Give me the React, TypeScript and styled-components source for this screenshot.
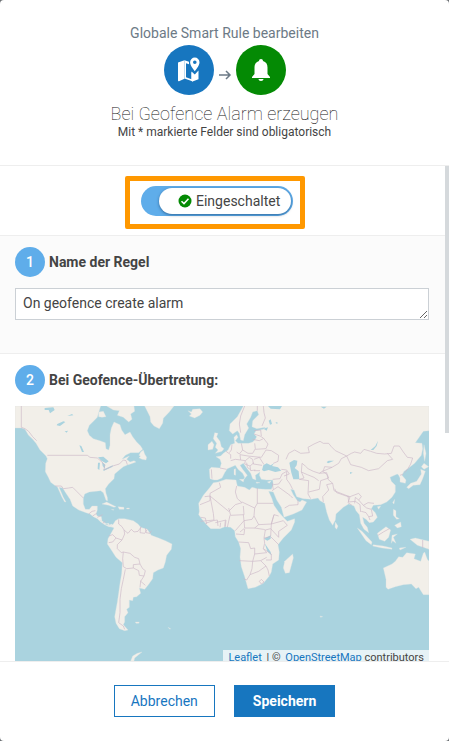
import React, { useState } from "react";
import styled, { createGlobalStyle } from "styled-components";

const GlobalStyle = createGlobalStyle`
  *, *::before, *::after { box-sizing: border-box; }
  body {
    margin: 0;
    background: #6b6f73;
    color: #444;
    font: 14px/20px Roboto, "Liberation Sans", sans-serif;
  }
  button, input, textarea { font: inherit; color: inherit; }
`;

const Dialog = styled.form`
  display: flex;
  flex-direction: column;
  height: 100vh;
  background: #fff;
  border-radius: 4px;
  overflow: hidden;
`;

const Header = styled.header`
  flex: none;
  display: flex;
  flex-direction: column;
  align-items: center;
  padding: 23px 15px 25px;
  border-bottom: 1px solid #eee;
  text-align: center;
`;

const Kicker = styled.p`
  margin: 0;
  line-height: 20px;
  color: #6c7a86;
`;

const RuleIcons = styled.div`
  display: flex;
  align-items: center;
  gap: 4px;
  margin: 2px 0 8px;
  color: #6c7a86;
`;

const IconDisc = styled.span<{ $color: string }>`
  display: grid;
  place-items: center;
  width: 50px;
  height: 50px;
  border-radius: 50%;
  background: ${(p) => p.$color};
  color: #fff;
`;

const ArrowIcon = styled.svg`
  margin-top: 10px;
`;

const Title = styled.h1`
  margin: 0;
  color: #111;
  font-size: 18px;
  line-height: 22px;
  font-weight: 100;
`;

const Hint = styled.p`
  margin: 0;
  font-size: 12px;
  line-height: 15px;
`;

const Body = styled.div`
  flex: 1;
  min-height: 0;
  display: flex;
`;

const Content = styled.div`
  flex: 1;
  min-width: 0;
  overflow-y: auto;
  scrollbar-width: none;
`;

const Rail = styled.div`
  width: 4px;
`;

const Thumb = styled.div`
  height: 54%;
  background: #d5d9dc;
`;

const SwitchRow = styled.div`
  display: flex;
  justify-content: center;
  padding: 10px 15px 6px 0;
  border-bottom: 1px solid #eee;
`;

const Highlight = styled.div`
  padding: 5px 7px 8px 11px;
  border: 5px solid #ff9800;
  border-radius: 2px;
`;

const Switch = styled.label`
  display: flex;
  height: 30px;
  padding: 2px;
  border-radius: 15px;
  background: #5fadea;
  cursor: pointer;
`;

const SwitchInput = styled.input`
  appearance: none;
  width: 16px;
  height: 26px;
  margin: 0;
  border-radius: 13px;
`;

const Knob = styled.span`
  display: flex;
  align-items: center;
  gap: 4px;
  width: 132px;
  padding-left: 19px;
  border-radius: 13px;
  background: #fff;
  box-shadow: 0 1px 3px rgba(0, 40, 80, 0.5);
`;

const Step = styled.section<{ $shaded?: boolean }>`
  padding: ${(p) => (p.$shaded ? "11px 16px 33px 15px" : "11px 16px 16px 15px")};
  background: ${(p) => (p.$shaded ? "#fbfbfb" : "#fff")};
  border-bottom: 1px solid #eee;
`;

const StepTitle = styled.h2`
  display: flex;
  align-items: center;
  gap: 4px;
  margin: 0 0 11px;
  font-size: 14px;
  line-height: 20px;
  font-weight: 700;
`;

const StepNumber = styled.span`
  display: grid;
  place-items: center;
  width: 30px;
  height: 30px;
  border-radius: 50%;
  background: #5fadea;
  color: #fff;
  font-weight: 500;
`;

const NameField = styled.textarea`
  display: block;
  width: 100%;
  height: 32px;
  padding: 4px 7px;
  border: 1px solid #cbd0d5;
  border-radius: 0;
  background: #fff;
  resize: vertical;
  overflow: hidden;
  outline: none;
`;

const MapFrame = styled.div`
  position: relative;
  height: 260px;
  background: #aad3df;
  overflow: hidden;
`;

const MapSvg = styled.svg`
  display: block;
  width: 100%;
  height: 262px;
`;

const Attribution = styled.div`
  position: absolute;
  right: 0;
  bottom: 0;
  padding: 0 5px;
  background: rgba(255, 255, 255, 0.7);
  font-size: 11px;
  line-height: 16px;
  white-space: pre;
`;

const Separator = styled.span`
  margin: 0 2px;
`;

const MapLink = styled.a`
  color: #1776bf;
  text-decoration: none;
`;

const Footer = styled.footer`
  flex: none;
  display: flex;
  justify-content: center;
  gap: 19px;
  padding: 23px 15px 24px;
  border-top: 1px solid #eee;
`;

const Button = styled.button<{ $primary?: boolean }>`
  height: 32px;
  padding: 0 ${(p) => (p.$primary ? "18px" : "16px")};
  border: 1px solid #1776bf;
  background: ${(p) => (p.$primary ? "#1776bf" : "#fff")};
  color: ${(p) => (p.$primary ? "#fff" : "#1776bf")};
  font-weight: ${(p) => (p.$primary ? 700 : 400)};
  line-height: 20px;
  cursor: pointer;
`;

const GeofenceIcon = () => (
  <svg width="22" height="26" viewBox="0 0 22 26" fill="currentColor" aria-hidden="true">
    <path d="M0 5.500 6.500 3.200V21.800L1 24.200C.4 24.400 0 24.200 0 23.600z" />
    <path d="M6.500 3.200 11 4.800V7.200L8 6.200V20.300L13.500 22.200V15L15 16.800V24.500L6.500 21.500z" />
    <path d="M13.500 14.500 16.800 17.500 20.500 13.500V22.300L14.500 24.500 13.500 24z" />
    <path
      fillRule="evenodd"
      stroke="#1776bf"
      strokeWidth="1"
      paintOrder="stroke"
      d="M16.800 .5a4.700 4.700 0 0 1 4.700 4.700c0 3.500-4.700 9-4.700 9s-4.700-5.500-4.700-9a4.700 4.700 0 0 1 4.700-4.700zm0 3a1.800 1.800 0 1 0 0 3.600 1.800 1.800 0 0 0 0-3.600z"
    />
  </svg>
);

const BellIcon = () => (
  <svg width="18" height="22" viewBox="0 0 18 22" fill="currentColor" aria-hidden="true">
    <path d="M9 0c1.200 0 2 .8 2 2 3 .8 4.500 3.200 4.500 6.500V15L18 18v1H0v-1l2.500-3V8.500C2.500 5.200 4 2.800 7 2c0-1.200.8-2 2-2zM6.500 20h5c0 1.200-1.200 2-2.500 2s-2.500-.8-2.500-2z" />
  </svg>
);

/* Map coordinates: 3 units per pixel. */
const lands = [
  // North America
  "M-405 0H-148L-158 34-168 44-182 58-188 74-182 88-170 98-150 104-134 110-132 128-124 132-120 118-120 86-116 66-108 48-90 56-85 72-75 86-60 78-52 92-40 108-28 120-22 130-34 140-58 140-74 148-84 160-62 150-70 160-60 168-48 164-42 168-58 174-68 177-80 182-92 192-106 204-108 218-124 234-134 248-132 262-128 274-127 284-132 283-140 260-148 254-162 256-182 258-196 264-200 277-200 294-194 310-182 310-174 300-158 300-158 312-162 324-158 330-146 332-144 344-136 354-126 358-114 354-112 364-124 362-136 356-148 348-158 338-170 332-180 324-192 320-214 312-232 300-240 280-252 262-262 246-273 244-267 257-260 274-252 288-256 288-264 274-272 256-278 242-286 238-298 229-305 214-314 197-313 172-308 158-312 150-320 142-330 132-342 112-352 100-365 87-375 70-385 66-405 66Z",
  "M-130 0H-48L-46 16-58 24-54 40-64 48-80 34-98 28-92 14-110 12ZM-154 18-140 16-132 32-144 34-154 32ZM-36 154-28 138-20 132-16 144-10 154-12 162-24 160Z",
  "M-144 294-130 288-114 296-102 302-108 304-124 298ZM-96 302-78 304-78 310-92 310ZM-116 310-108 311-110 313ZM-70 306-62 306-62 309-70 309Z",
  // Greenland and Iceland
  "M-16 0 0 32 2 48 12 60 28 68 38 52 40 37 58 18 72 0ZM114 14 124 18 128 10 150 8 158 18 150 28 134 36 118 30 124 24Z",
  // South America
  "M-150 342-136 354-124 352-120 362-110 354-104 344-94 338-76 338-50 344-36 354-28 364-8 370 4 388 26 396 46 404 66 414 64 430 50 448 46 468 40 486 24 492 10 500 8 518-6 538-16 550-32 546-28 562-40 572-50 574-52 584-62 582-62 604-70 610-66 620-76 632-76 648-80 656-66 672-76 674-92 668-102 652-106 632-102 610-98 588-94 560-90 532-85 502-83 470-102 454-116 432-128 414-126 398-116 380-108 366Z",
  "M-44 648-32 648-34 652-42 652ZM54 664 62 668 60 670ZM-58 765-52 750-38 742-24 738-34 746-46 756-48 765Z",
  // Europe, Africa and Asia
  "M280 0 262 32 240 54 238 74 248 84 262 74 268 82 272 102 280 104 284 86 296 66 290 54 302 34 308 18 322 14 326 26 308 44 306 62 320 68 346 64 340 70 318 74 312 84 320 92 316 100 308 108 296 112 276 112 264 112 256 104 264 94 260 86 252 94 254 112 242 116 234 132 220 142 212 150 198 152 210 160 214 172 210 186 184 184 178 190 180 218 192 222 202 222 216 216 224 200 232 188 246 182 256 178 264 190 278 202 284 214 280 222 292 208 278 190 270 178 280 172 290 186 302 202 308 218 318 222 316 208 330 198 328 208 334 220 350 222 368 222 370 236 364 250 346 250 322 248 306 244 298 252 284 244 262 240 258 222 228 220 204 228 190 230 180 244 160 268 146 292 148 316 146 326 156 340 170 356 182 368 210 368 225 362 242 364 254 374 256 392 266 408 272 428 270 454 274 482 284 512 294 548 316 544 340 532 358 510 364 498 368 474 386 462 388 438 384 416 400 396 424 372 434 348 434 338 412 346 402 336 386 318 372 298 366 278 356 256 370 258 380 282 394 304 402 334 430 324 456 312 470 288 456 282 450 288 442 284 430 266 422 250 432 252 440 272 460 278 484 280 504 276 510 284 524 292 530 318 538 342 548 358 556 342 558 324 580 304 596 294 612 300 618 314 628 326 632 352 642 370 656 380 652 364 642 352 638 334 648 340 658 350 670 348 682 334 676 320 664 308 670 298 692 296 710 288 726 274 736 258 736 238 724 226 720 214 742 204 746 208 750 216 750 228 766 232 768 222 756 208 762 196 776 186 794 172 814 148 818 128 816 112 796 110 820 76 837 74V0Z",
  "M194 80 204 82 200 92 210 106 214 122 222 128 216 136 196 142 204 132 196 124 200 112 190 98ZM174 116 186 106 192 116 188 130 174 132ZM252 190 257 188 257 208 252 206ZM268 220 282 220 280 228ZM318 228 330 230 320 232ZM352 228 364 224 358 232Z",
  "M404 466 428 444 430 456 418 500 406 502 400 486Z",
  "M770 244 782 232 800 226 814 204 812 190 826 196 818 218 810 236 790 238 776 248ZM814 182 822 172 836 182 822 190ZM822 116 828 142 824 166 820 142ZM728 290 734 280 732 294ZM682 302 692 300 686 310ZM556 348 564 360 560 370 555 364Z",
  "M730 310 738 314 738 332 748 338 740 340 730 328ZM734 358 752 348 754 362 742 366ZM622 366 636 376 666 408 664 416 648 404ZM670 416 700 420 726 426 726 430 696 426 668 420ZM682 382 708 362 722 372 716 394 704 406 688 400ZM726 388 742 384 730 394 738 412 728 404 724 412ZM780 400 796 396 837 406V430L820 424 802 418ZM748 426 768 424 750 432Z",
  "M700 486 726 474 736 466 746 452 758 454 770 440 796 444 792 458 812 466 820 442 824 438 832 460 837 466V566H820L806 544 798 548 784 534 760 536 736 542 714 550 708 544 708 520ZM510 630 518 632 512 634Z",
];

const waters = [
  "M336 192 340 178 350 172 362 178 372 172 366 180 384 184 394 194 376 198 356 192 342 196Z",
  "M418 170 432 162 442 164 440 178 434 186 446 196 448 220 430 220 424 200Z",
  "M-156 154-140 152-124 166-132 172-146 164ZM-156 170-150 170-152 192-157 188ZM-144 168-134 176-136 188-142 180ZM-142 192-112 178-112 182-138 194ZM-212 118-206 120-198 138-204 138Z",
  "M-316 6-290 4-286 12-300 22-304 12-316 12ZM-278 54-260 46-254 48-270 60-280 58ZM-256 76-246 74-250 80ZM-248 30-234 24-230 28ZM-60 151-40 146-28 150-34 156-58 158Z",
  "M340 68 354 64 350 74ZM356 44 362 40 366 54 360 56ZM354 0 362 8 390 10 396 0ZM376 50 382 48 382 54Z",
  "M662 132 676 120 684 104 680 120 670 132ZM512 2 530 2 522 8ZM530 168 536 164 552 164 534 172ZM600 198 608 200 600 204ZM342 398 362 388 362 398 352 404ZM344 412 362 438 364 448 352 436Z",
];

const borders = [
  "M-386 0V64L-375 68-364 76-352 92-340 104M-308 148H-188L-180 154-158 156-144 168-136 178-138 192-112 180-92 174-80 162-72 164-68 176M-284 240-266 240-260 248-244 246-232 244-220 256-212 264-200 276M-184 324-174 316-164 314M-172 330-160 322M-158 334-142 326M-142 352-134 346",
  "M-94 340-94 354-84 362-78 372-66 382-56 370-48 378-36 376-26 362M-28 364-30 380-16 382-8 370M-14 366-12 380 0 382 4 374M-124 390-112 386-102 396-84 402-76 384-78 372M-124 410-112 408-102 396M-84 402-98 416-98 428-86 440-80 438-60 442-46 454-34 458-30 474-50 476-50 486-70 488-80 482-82 458-80 438M-74 490-80 520-86 548-90 580-90 620-94 650-80 660-76 670M-50 486-34 494-32 508-18 510-14 494-22 488-30 474M-18 510-28 526-30 544M-30 524-14 538",
  "M272 80 268 54 272 30 284 0M322 14 322 0M340 0 342 20 346 36 336 60M184 190 186 218M210 186 230 190M228 136 242 146 242 158M246 116 244 132 238 140M274 112 278 132 268 144 260 138M278 132 294 142 308 142 316 128 314 112M242 164 256 160 272 162 270 146 294 150 312 152M272 162 286 164 298 154 308 160 310 174 336 178M286 164 284 174 300 180 302 194 316 192M300 180 312 170M290 170 292 184 300 190M312 194 330 194M312 84 330 90 340 96 354 114 348 128 316 130M308 100 328 104 340 98M312 74 332 72 334 90M312 152 334 154 348 132 364 134 386 148 384 166 370 172M312 160 328 154 342 176M394 190 410 192 418 204 402 210",
  "M368 220 390 218 396 204 410 196 410 220 420 234 428 250M370 236 386 234 396 220M366 254 384 242 420 268 428 276M404 306 418 298 444 296 444 280M366 230 370 250",
  "M208 230 212 244 180 262 180 284 150 296M164 272 180 270 190 322 192 342 152 346M180 270 236 316 256 296 276 290 262 278 256 258 260 240M322 246V292H370M276 288 314 306 322 292M236 306 242 328 282 326 280 300M314 306 312 330 326 356 364 354 372 326 386 330M152 334 166 336 170 354M166 352 190 344 202 342 204 360M196 350 228 342 226 362M210 364 212 350M224 362 226 344M232 364 240 328M256 374 282 344 280 326M282 344 306 340 312 330M282 344 284 366 314 366 326 356M364 354 400 344 412 358 386 376 386 394M372 326 364 354 362 390M270 378 282 368M258 384 282 386 284 368M266 408 296 410 302 428 314 426 314 444M314 366 340 370 346 372 342 396 344 412 340 428 350 440 314 444 308 466 268 464M308 466 306 488 300 506 290 522 280 518M300 506 326 496 348 480 354 492 358 510M308 466 332 464 348 480M340 428 364 444 364 462 348 462M332 464 350 454M334 520 342 528 334 534 328 526ZM342 396 362 392 378 408 386 416M362 368 386 394M346 372 362 368",
  "M408 160 416 142 434 132 452 142 478 140 474 124 492 114 510 106 520 112 536 112 544 122 556 134 590 150 574 158 566 172 546 184 524 182 520 194 508 202 490 196 474 188 466 180 456 172 454 198 472 206 492 214 506 224M590 150 604 142 614 138 632 142 642 130 662 136 680 142 704 144 724 142 732 120 748 120 760 138 772 154 788 156 782 174 774 188 764 200M590 150 602 176 634 184 656 194 686 188 712 164 728 160 712 142M454 198 462 216 448 220 476 224 474 264 482 278M476 258 508 250 512 224 536 216 532 206 518 196 546 184M508 202 530 200 534 220 548 232 552 254 588 268 600 272 626 262 634 272 626 282 616 274 614 292M548 232 530 236 536 252 518 272 520 288M554 248 560 260 600 274 594 290 606 298M594 270 596 288 616 286 630 296 632 318M626 282 640 298 654 290 672 292M640 298 650 306 664 310 668 330 656 332 648 320 634 316M656 332 660 342M750 208 760 204M684 388 700 378 718 368M818 402V426",
];

const WorldMap = () => (
  <MapSvg viewBox="0 0 1242 786" preserveAspectRatio="xMidYMin slice" role="img" aria-label="Weltkarte">
    <g transform="translate(405 0)" strokeLinejoin="round">
      {lands.map((d) => (
        <path key={d} d={d} fill="#f2efe9" stroke="#dce5e4" strokeWidth="1" />
      ))}
      {waters.map((d) => (
        <path key={d} d={d} fill="#aad3df" />
      ))}
      {borders.map((d) => (
        <path key={d} d={d} fill="none" stroke="#cdb9c9" strokeWidth="2" />
      ))}
    </g>
  </MapSvg>
);

export default function App() {
  const [enabled, setEnabled] = useState(true);
  return (
    <>
      <GlobalStyle />
      <Dialog onSubmit={(e) => e.preventDefault()}>
        <Header>
          <Kicker>Globale Smart Rule bearbeiten</Kicker>
          <RuleIcons>
            <IconDisc $color="#1776bf">
              <GeofenceIcon />
            </IconDisc>
            <ArrowIcon width="14" height="10" viewBox="0 0 14 10" fill="none" stroke="currentColor" aria-hidden="true">
              <path d="M1 5h11M8 1l4 4-4 4" strokeWidth="1.500" />
            </ArrowIcon>
            <IconDisc $color="#048a04">
              <BellIcon />
            </IconDisc>
          </RuleIcons>
          <Title>Bei Geofence Alarm erzeugen</Title>
          <Hint>Mit * markierte Felder sind obligatorisch</Hint>
        </Header>
        <Body>
          <Content>
            <SwitchRow>
              <Highlight>
                <Switch>
                  <SwitchInput type="checkbox" role="switch" checked={enabled} onChange={(e) => setEnabled(e.target.checked)} />
                  <Knob>
                    <svg width="14" height="14" viewBox="0 0 14 14" aria-hidden="true">
                      <circle cx="7" cy="7" r="6.500" fill="#048a04" />
                      <path d="M3.500 7.200 6 9.600l4.500-4.800" fill="none" stroke="#fff" strokeWidth="1.500" />
                    </svg>
                    Eingeschaltet
                  </Knob>
                </Switch>
              </Highlight>
            </SwitchRow>
            <Step $shaded>
              <StepTitle>
                <StepNumber>1</StepNumber>
                <label htmlFor="rule-name">Name der Regel</label>
              </StepTitle>
              <NameField id="rule-name" rows={1} defaultValue="On geofence create alarm" />
            </Step>
            <Step>
              <StepTitle>
                <StepNumber>2</StepNumber>
                Bei Geofence-Übertretung:
              </StepTitle>
              <MapFrame>
                <WorldMap />
                <Attribution>
                  <MapLink href="#leaflet">Leaflet</MapLink>
                  <Separator> | © </Separator>
                  <MapLink href="#osm">OpenStreetMap</MapLink> contributors
                </Attribution>
              </MapFrame>
            </Step>
          </Content>
          <Rail>
            <Thumb />
          </Rail>
        </Body>
        <Footer>
          <Button type="button">Abbrechen</Button>
          <Button type="submit" $primary>
            Speichern
          </Button>
        </Footer>
      </Dialog>
    </>
  );
}
